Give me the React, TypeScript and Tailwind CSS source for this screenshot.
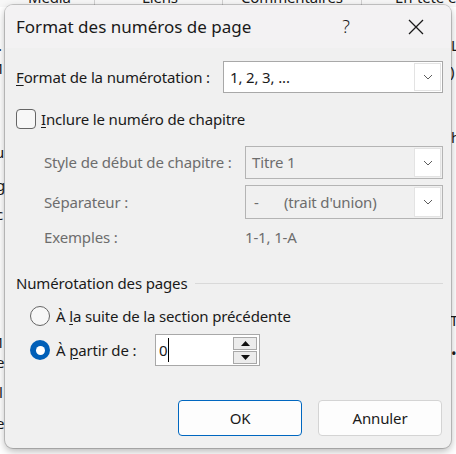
import React from "react";

const FONT = "font-['Segoe_UI','Noto_Sans',sans-serif]";

function Chevron() {
  return (
    <svg width="10" height="6" viewBox="0 0 10 6">
      <path d="M1 1l4 4 4-4" fill="none" stroke="#5c5c5c" strokeWidth="1" />
    </svg>
  );
}

function Select({
  value,
  disabled = false,
  className = "",
}: {
  value: React.ReactNode;
  disabled?: boolean;
  className?: string;
}) {
  return (
    <div
      className={`flex h-full items-center border ${
        disabled ? "border-[#b4b4b4] bg-[#f0f0f0] text-[#6d6d6d]" : "border-[#a8a8a8] bg-white text-[#1a1a1a]"
      } ${className}`}
    >
      <div className="flex-1 pl-[6px]">{value}</div>
      <div className="mr-[1px] flex h-[calc(100%-2px)] w-[27px] items-center justify-center border border-[#e3e3e3] bg-white">
        <Chevron />
      </div>
    </div>
  );
}

function Radio({ checked = false }: { checked?: boolean }) {
  return checked ? (
    <div className="flex h-[20px] w-[20px] shrink-0 items-center justify-center rounded-full bg-[#005fb8]">
      <div className="h-[9px] w-[9px] rounded-full bg-white" />
    </div>
  ) : (
    <div className="h-[20px] w-[20px] shrink-0 rounded-full border border-[#656565] bg-[#f7f7f7]" />
  );
}

export default function App() {
  return (
    <div className={`relative h-[454px] w-[456px] overflow-hidden bg-white ${FONT} text-[15px] tracking-[-0.15px] text-[#1a1a1a]`}>
      {/* ribbon behind the dialog */}
      <div className="absolute left-0 top-[-13px] flex h-[20px] w-[470px] bg-[#f7f7f7] text-[15px] leading-[20px]">
        <div className="w-[95px] border-r border-[#d0d0d0] pl-[28px]">Média</div>
        <div className="w-[128px] border-r border-[#d0d0d0] pl-[47px]">Liens</div>
        <div className="w-[139px] border-r border-[#d0d0d0] pl-[18px]">Commentaires</div>
        <div className="pl-[33px]">En-tête et</div>
      </div>
      {/* document fragments at the edges */}
      <span className="absolute left-[-2px] top-[34px]">.</span>
      <span className="absolute left-[-4px] top-[57px]">1</span>
      <span className="absolute left-[-5px] top-[141px]">u</span>
      <span className="absolute left-[-4px] top-[174px]">g</span>
      <span className="absolute left-[-4px] top-[203px]">c</span>
      <span className="absolute left-[-4px] top-[331px]">1</span>
      <span className="absolute left-[-4px] top-[351px]">e</span>
      <span className="absolute left-[-1px] top-[381px]">l</span>
      <span className="absolute left-[-4px] top-[412px]">e</span>
      <span className="absolute left-[451px] top-[34px]">L</span>
      <span className="absolute left-[450px] top-[60px]">)</span>
      <span className="absolute left-[451px] top-[126px]">h</span>
      <span className="absolute left-[450px] top-[309px]">T</span>
      <span className="absolute left-[451px] top-[342px]">•</span>

      {/* dialog window */}
      <div className="absolute left-[5px] top-[5px] h-[443px] w-[446px] overflow-hidden rounded-[8px] bg-[#f0f0f0] shadow-[0_0_0_1px_rgba(0,0,0,0.18),0_3px_8px_rgba(0,0,0,0.3)]">
        <div className="flex h-[43px] items-center bg-[#f3f2f3]">
          <div className="flex-1 pl-[11px] text-[17px] tracking-normal">Format des numéros de page</div>
          <div className="flex h-full w-[70px] items-center justify-center text-[18px] font-light">?</div>
          <div className="flex h-full w-[70px] items-center justify-center">
            <svg width="16" height="16" viewBox="0 0 16 16">
              <path d="M1 1l14 14M15 1L1 15" stroke="#1a1a1a" strokeWidth="1.3" />
            </svg>
          </div>
        </div>

        <div className="flex flex-col pl-[11px] pr-[8px]">
          <div className="mt-[13px] flex h-[32px] items-center">
            <div className="w-[207px]">
              <u className="underline-offset-2">F</u>ormat de la numérotation :
            </div>
            <Select value="1, 2, 3, ..." className="w-[220px]" />
          </div>

          <div className="mt-[16px] flex h-[20px] items-center">
            <div className="h-[20px] w-[20px] rounded-[4px] border border-[#656565] bg-[#f7f7f7]" />
            <div className="ml-[5px]">
              <u className="underline-offset-2">I</u>nclure le numéro de chapitre
            </div>
          </div>

          <div className="mt-[17px] flex h-[33px] items-center text-[#6d6d6d]">
            <div className="w-[229px] pl-[28px]">Style de début de chapitre :</div>
            <Select value="Titre 1" disabled className="w-[198px]" />
          </div>

          <div className="mt-[6px] flex h-[34px] items-center text-[#6d6d6d]">
            <div className="w-[229px] pl-[28px]">Séparateur :</div>
            <Select
              value={
                <span>
                  <span className="inline-block w-[32px] pl-[2px]">-</span>(trait d'union)
                </span>
              }
              disabled
              className="w-[198px]"
            />
          </div>

          <div className="mt-[9px] flex h-[18px] items-center text-[#6d6d6d]">
            <div className="w-[229px] pl-[28px]">Exemples :</div>
            <div>1-1, 1-A</div>
          </div>

          <div className="mt-[28px] flex h-[18px] items-center">
            <div>Numérotation des pages</div>
            <div className="ml-[8px] h-px flex-1 bg-[#d9d9d9]" />
          </div>

          <div className="mt-[14px] flex h-[20px] items-center pl-[14px]">
            <Radio />
            <div className="ml-[6px]">
              À <u className="underline-offset-2">l</u>a suite de la section précédente
            </div>
          </div>

          <div className="mt-[8px] flex h-[32px] items-center pl-[14px]">
            <Radio checked />
            <div className="ml-[6px] w-[99px]">
              À <u className="underline-offset-2">p</u>artir de :
            </div>
            <div className="flex h-full w-[105px] items-center border border-[#a8a8a8] bg-white">
              <div className="flex flex-1 items-center pl-[3px]">
                0<span className="ml-[1px] inline-block h-[24px] w-px bg-black" />
              </div>
              <div className="mr-[2px] flex flex-col gap-[1px]">
                <div className="flex h-[13px] w-[24px] items-center justify-center border border-[#a8a8a8] bg-[#ececec]">
                  <svg width="9" height="5" viewBox="0 0 9 5">
                    <path d="M0 5L4.5 0L9 5Z" fill="#111" />
                  </svg>
                </div>
                <div className="flex h-[13px] w-[24px] items-center justify-center border border-[#a8a8a8] bg-[#ececec]">
                  <svg width="9" height="5" viewBox="0 0 9 5">
                    <path d="M0 0L4.5 5L9 0Z" fill="#111" />
                  </svg>
                </div>
              </div>
            </div>
          </div>

          <div className="mr-[1px] mt-[34px] flex justify-end gap-[16px]">
            <div className="flex h-[36px] w-[124px] items-center justify-center rounded-[4px] border border-[#0067c0] bg-[#fdfdfd]">
              OK
            </div>
            <div className="flex h-[36px] w-[124px] items-center justify-center rounded-[4px] border border-[#d4d4d4] bg-[#fdfdfd]">
              Annuler
            </div>
          </div>
        </div>
      </div>
    </div>
  );
}
